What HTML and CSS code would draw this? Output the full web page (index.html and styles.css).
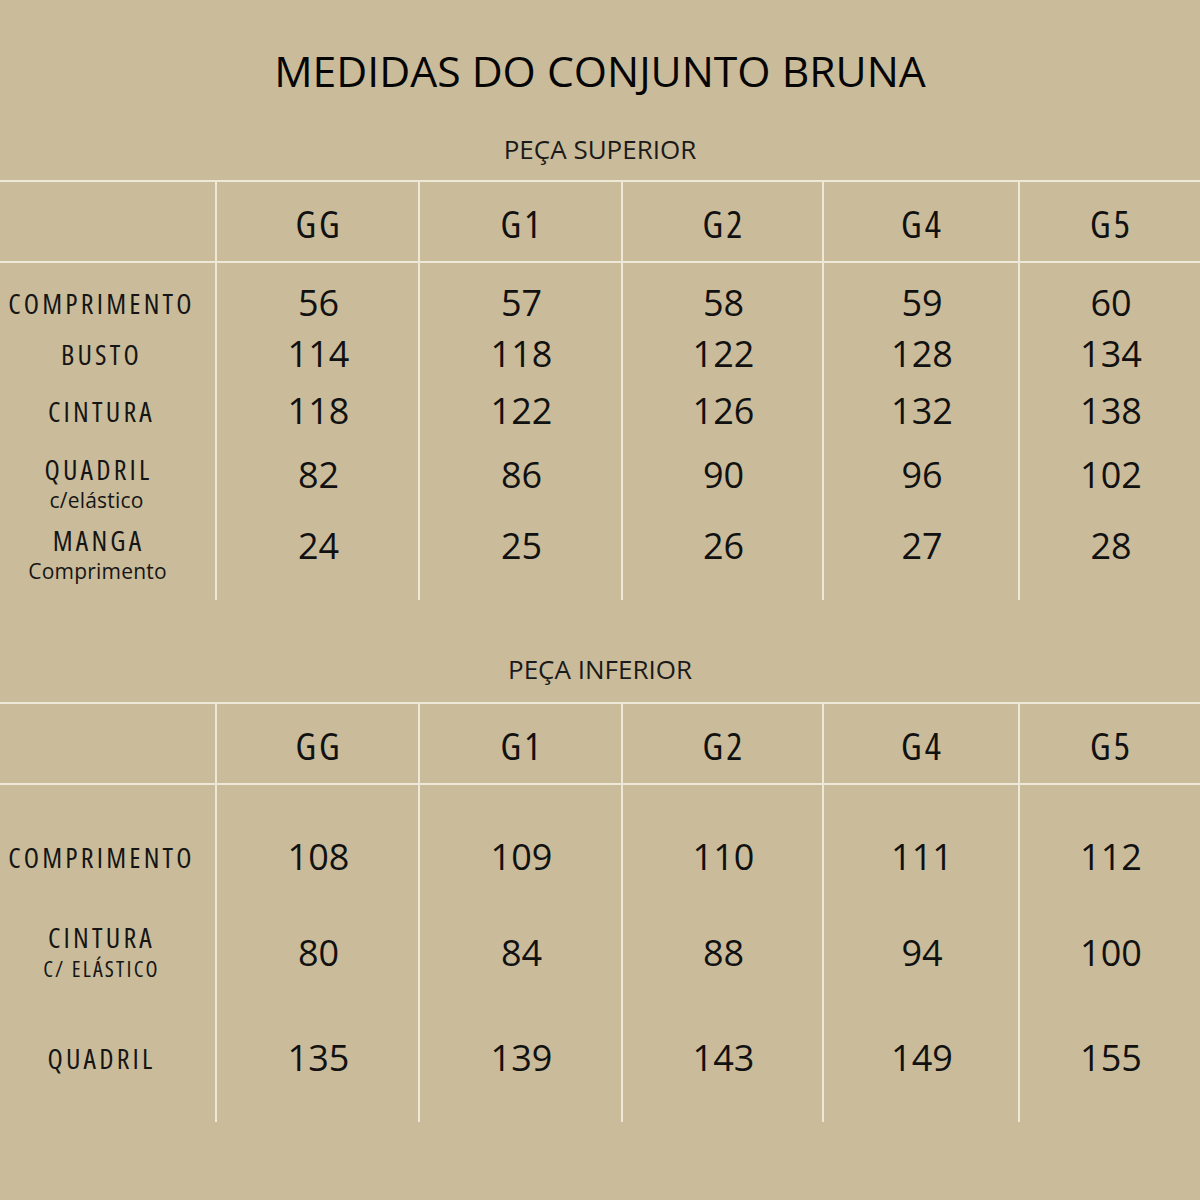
FILE: index.html
```html
<!DOCTYPE html>
<html lang="pt-BR">
<head>
<meta charset="utf-8">
<title>Medidas do Conjunto Bruna</title>
<link rel="stylesheet" href="styles.css">
</head>
<body>
<main class="page">
  <h1 class="title">MEDIDAS DO CONJUNTO BRUNA</h1>

  <h2 class="subtitle">PEÇA SUPERIOR</h2>
  <section class="table">
    <div class="row head">
      <div class="cell label"></div>
      <div class="cell size">GG</div>
      <div class="cell size">G1</div>
      <div class="cell size">G2</div>
      <div class="cell size">G4</div>
      <div class="cell size">G5</div>
    </div>
    <div class="row t1a">
      <div class="cell label"><span class="main">COMPRIMENTO</span></div>
      <div class="cell num">56</div>
      <div class="cell num">57</div>
      <div class="cell num">58</div>
      <div class="cell num">59</div>
      <div class="cell num">60</div>
    </div>
    <div class="row t1b">
      <div class="cell label"><span class="main">BUSTO</span></div>
      <div class="cell num">114</div>
      <div class="cell num">118</div>
      <div class="cell num">122</div>
      <div class="cell num">128</div>
      <div class="cell num">134</div>
    </div>
    <div class="row t1c">
      <div class="cell label"><span class="main">CINTURA</span></div>
      <div class="cell num">118</div>
      <div class="cell num">122</div>
      <div class="cell num">126</div>
      <div class="cell num">132</div>
      <div class="cell num">138</div>
    </div>
    <div class="row t1d">
      <div class="cell label"><span class="main">QUADRIL</span><span class="sub">c/elástico</span></div>
      <div class="cell num">82</div>
      <div class="cell num">86</div>
      <div class="cell num">90</div>
      <div class="cell num">96</div>
      <div class="cell num">102</div>
    </div>
    <div class="row t1e">
      <div class="cell label"><span class="main">MANGA</span><span class="sub">Comprimento</span></div>
      <div class="cell num">24</div>
      <div class="cell num">25</div>
      <div class="cell num">26</div>
      <div class="cell num">27</div>
      <div class="cell num">28</div>
    </div>
  </section>

  <h2 class="subtitle second">PEÇA INFERIOR</h2>
  <section class="table">
    <div class="row head">
      <div class="cell label"></div>
      <div class="cell size">GG</div>
      <div class="cell size">G1</div>
      <div class="cell size">G2</div>
      <div class="cell size">G4</div>
      <div class="cell size">G5</div>
    </div>
    <div class="row t2a">
      <div class="cell label"><span class="main">COMPRIMENTO</span></div>
      <div class="cell num">108</div>
      <div class="cell num">109</div>
      <div class="cell num">110</div>
      <div class="cell num">111</div>
      <div class="cell num">112</div>
    </div>
    <div class="row t2b">
      <div class="cell label"><span class="main">CINTURA</span><span class="sub caps">C/ ELÁSTICO</span></div>
      <div class="cell num">80</div>
      <div class="cell num">84</div>
      <div class="cell num">88</div>
      <div class="cell num">94</div>
      <div class="cell num">100</div>
    </div>
    <div class="row t2c">
      <div class="cell label"><span class="main">QUADRIL</span></div>
      <div class="cell num">135</div>
      <div class="cell num">139</div>
      <div class="cell num">143</div>
      <div class="cell num">149</div>
      <div class="cell num">155</div>
    </div>
  </section>
</main>
</body>
</html>
```

FILE: styles.css
```css
* { box-sizing: border-box; }

html, body {
  margin: 0;
  padding: 0;
  background: #cabc9a;
}

body {
  width: 1200px;
  height: 1200px;
  overflow: hidden;
  font-family: "Open Sans", "Noto Sans", sans-serif;
  color: #111;
}

.page {
  display: flex;
  flex-direction: column;
  padding-top: 46px;
}

.title {
  margin: 0;
  font-size: 42.7px;
  line-height: 50px;
  font-weight: 400;
  text-align: center;
  color: #050505;
}

.subtitle {
  margin: 38px 0 16px;
  font-size: 26px;
  line-height: 30px;
  font-weight: 400;
  letter-spacing: 0;
  text-align: center;
  color: #1a1a1a;
}

.subtitle.second {
  margin: 54px 0 18px;
}

.table {
  border-top: 2px solid #eee8d8;
}

.row {
  display: grid;
  grid-template-columns: 215px 203px 203px 201px 196px 182px;
}

.row.head {
  height: 81px;
  border-bottom: 2px solid #eee8d8;
}

.cell {
  display: flex;
  flex-direction: column;
  align-items: center;
  justify-content: center;
  font-stretch: 75%;
}

.cell + .cell {
  border-left: 2px solid #eee8d8;
}

.size {
  font-size: 38px;
  line-height: 44px;
  font-stretch: 75%;
  letter-spacing: 3px;
  padding-left: 3px;
  padding-top: 2px;
}

.num {
  font-size: 36px;
  line-height: 40px;
  font-stretch: 100%;
  padding-left: 2px;
}

.label {
  padding-right: 12px;
  color: #151515;
}

.main {
  font-size: 28px;
  line-height: 32px;
  letter-spacing: 3.2px;
}

.sub {
  font-size: 21px;
  line-height: 30px;
  font-stretch: 100%;
  letter-spacing: 0.2px;
}

.sub.caps {
  font-size: 22px;
  font-stretch: 75%;
  letter-spacing: 2.2px;
}

/* upper table rows */
.t1a { height: 65px; }
.t1a .cell { padding-top: 15px; }
.t1b { height: 52px; }
.t1c { height: 64px; }
.t1c .cell { padding-bottom: 2px; }
.t1d { height: 78px; }
.t1d .label { padding-top: 2px; padding-right: 18px; }
.t1d .sub { margin-right: 4px; }
.t1d .num { padding-bottom: 16px; }
.t1e { height: 78px; }
.t1e .cell { padding-bottom: 10px; }
.t1e .label { padding-bottom: 13px; padding-right: 18px; }
.t1e .sub { margin-right: 2px; }
.t1e .num { padding-bottom: 30px; }

/* lower table rows */
.t2a { height: 108px; }
.t2a .cell { padding-top: 36px; }
.t2b { height: 120px; }
.t2b .label { padding-bottom: 2px; }
.t2c { height: 109px; }
.t2c .cell { padding-bottom: 19px; }
```
